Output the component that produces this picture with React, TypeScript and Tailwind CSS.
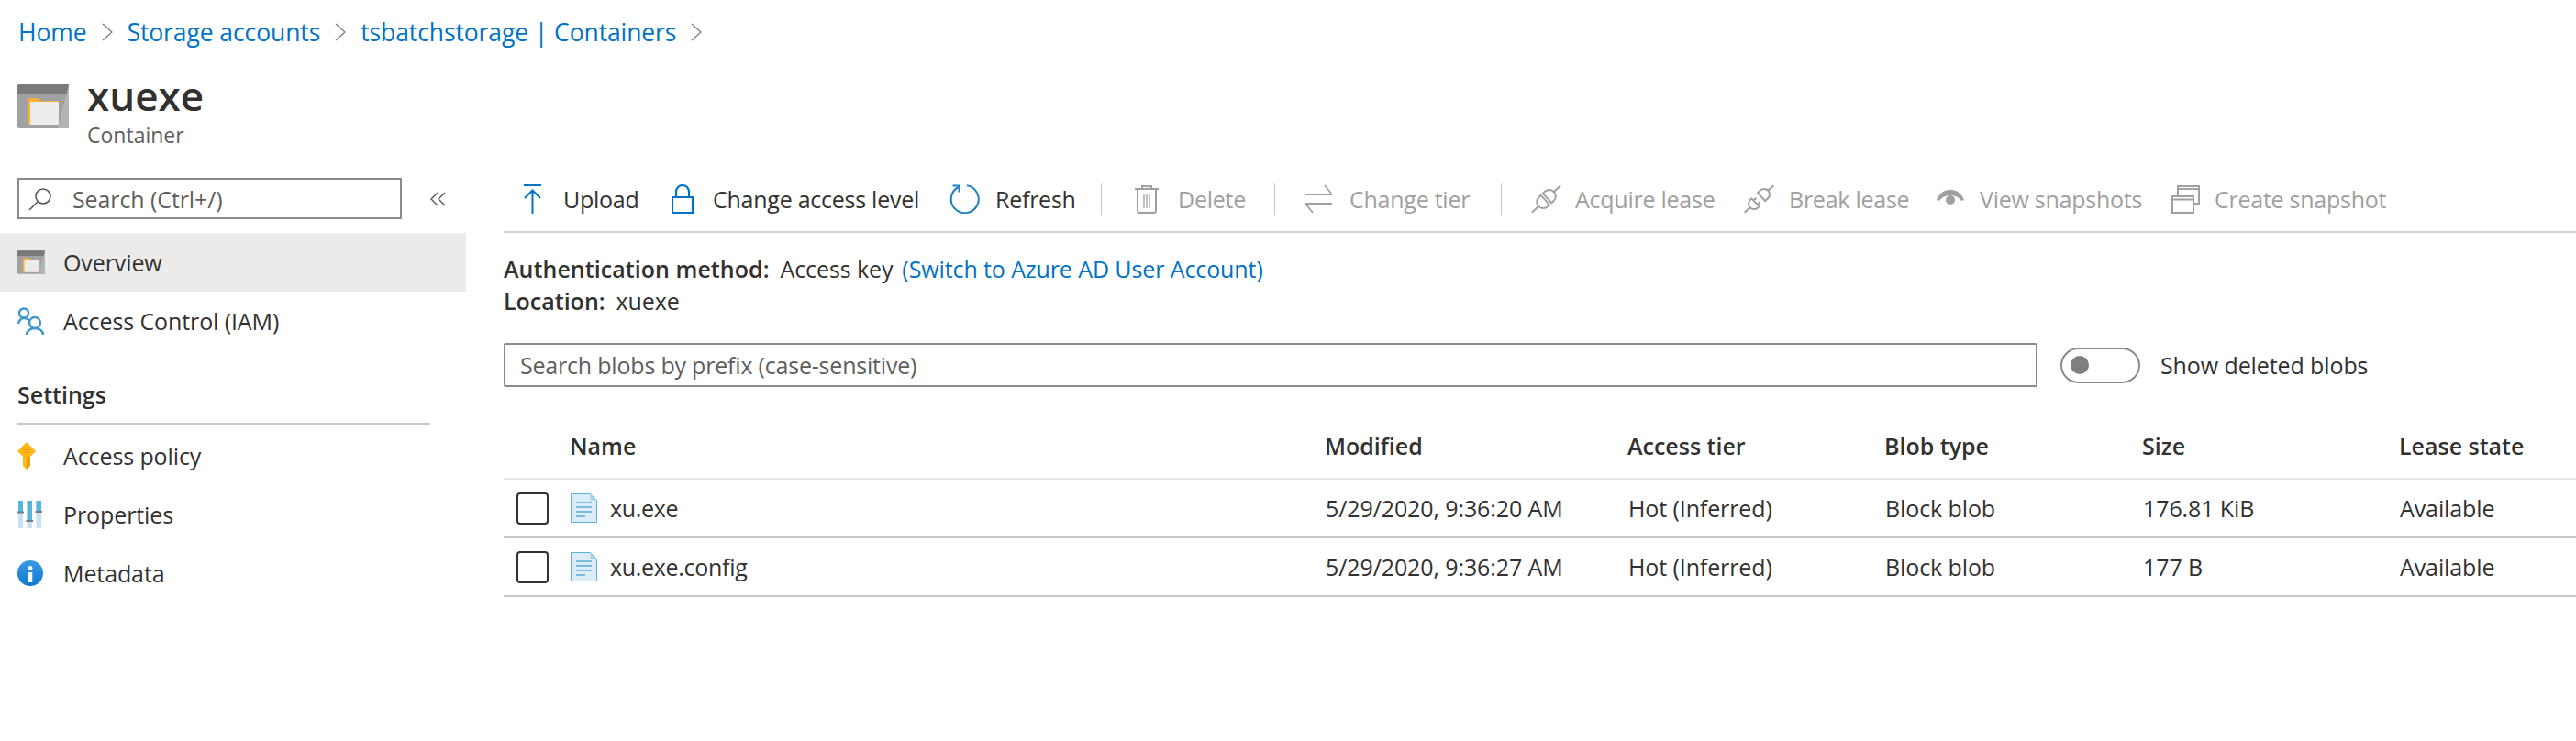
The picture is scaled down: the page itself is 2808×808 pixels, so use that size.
import type { ReactNode } from "react";

const columns = ["w-[823px]", "w-[330px]", "w-[280px]", "w-[281px]", "w-[280px]"];

const blobs = [
  { name: "xu.exe", modified: "5/29/2020, 9:36:20 AM", tier: "Hot (Inferred)", type: "Block blob", size: "176.81 KiB", lease: "Available" },
  { name: "xu.exe.config", modified: "5/29/2020, 9:36:27 AM", tier: "Hot (Inferred)", type: "Block blob", size: "177 B", lease: "Available" },
];

function ContainerIcon({ className }: { className: string }) {
  return (
    <svg viewBox="0 0 56 48" className={className}>
      <rect width="56" height="48" rx="2" fill="#a0a1a2" />
      <path d="M0 2a2 2 0 0 1 2-2h54v11H0z" fill="#7a7a7a" />
      <path d="M44 48 56 0v48z" fill="#b3b4b5" />
      <path d="M11 15h12l2 3h20v26H11z" fill="#fbb034" />
      <rect x="14" y="19" width="31" height="25" fill="#ececec" />
    </svg>
  );
}

function FileIcon() {
  return (
    <svg viewBox="0 0 29 32" className="h-[32px] w-[29px] shrink-0">
      <path d="M.5.5h21l7 7v24H.5z" fill="#dcedf7" stroke="#59b4d9" />
      <path d="M21.5.5v7h7z" fill="#9fd4ec" />
      <path d="M6 10h17M6 15h17M6 20h17M6 25h10" stroke="#59a9d4" strokeWidth="1.6" />
    </svg>
  );
}

function PlugIcon({ broken }: { broken?: boolean }) {
  return (
    <svg viewBox="0 0 33 32" fill="none" stroke="#a0a0a0" strokeWidth="2" className="h-[32px] w-[33px] shrink-0">
      <g transform="rotate(-43 16.5 16)">
        {broken ? (
          <>
            <path d="M-5 16H4M30 16H38" />
            <path d="M11 10H9a6 6 0 0 0 0 12h2zM11 13h4M11 19h4" />
            <path d="M20 10h4a6 6 0 0 1 0 12h-4z" />
          </>
        ) : (
          <>
            <path d="M-5 16H6M27 16H38" />
            <path d="M15 9h-3a7 7 0 0 0 0 14h3z" />
            <path d="M18 9h3a7 7 0 0 1 0 14h-3z" />
          </>
        )}
      </g>
    </svg>
  );
}

function Chevron() {
  return (
    <svg viewBox="0 0 12 20" fill="none" stroke="#777" strokeWidth="1.2" className="mx-[16px] h-[20px] w-[12px]">
      <path d="M1 1l10 9-10 9" />
    </svg>
  );
}

function ToolItem({ icon, label, disabled, gap, width }: { icon: ReactNode; label: string; disabled?: boolean; gap: string; width: string }) {
  return (
    <div className={`flex items-center ${gap} ${disabled ? "text-[#a0a0a0]" : "text-[#323130]"}`}>
      {icon}
      <span className={`${width} whitespace-nowrap tracking-[-0.25px]`}>{label}</span>
    </div>
  );
}

function NavItem({ icon, label, active }: { icon: ReactNode; label: string; active?: boolean }) {
  return (
    <div className={`flex h-[64px] items-center pl-[19px] ${active ? "bg-[#edebe9]" : ""}`}>
      <div className="flex w-[50px] shrink-0 items-center">{icon}</div>
      <span>{label}</span>
    </div>
  );
}

export default function App() {
  return (
    <div className="h-[808px] w-[2808px] overflow-hidden bg-white font-['Open_Sans','Noto_Sans',sans-serif] text-[25px] leading-[32px] tracking-[-0.1px] text-[#323130]">
      <nav className="flex h-[70px] items-center pl-[20px] text-[26.5px] text-[#0072c6]">
        <span>Home</span>
        <Chevron />
        <span>Storage accounts</span>
        <Chevron />
        <span>tsbatchstorage | Containers</span>
        <Chevron />
      </nav>

      <header className="flex h-[100px] pl-[19px]">
        <ContainerIcon className="mt-[22px] h-[48px] w-[56px]" />
        <div className="ml-[20px]">
          <h1 className="mt-[6px] text-[44px] leading-[56px] font-semibold tracking-normal text-[#323130]">xuexe</h1>
          <p className="text-[23px] leading-[30px] tracking-normal text-[#605e5c]">Container</p>
        </div>
      </header>

      <div className="flex pt-[24px]">
        <aside className="w-[508px] shrink-0">
          <div className="flex h-[45px] items-center">
            <div className="ml-[19px] flex h-[45px] w-[419px] items-center border-2 border-[#8a8a8a] pl-[10px] text-[#605e5c]">
              <svg viewBox="0 0 26 26" fill="none" stroke="#555" strokeWidth="1.6" className="h-[26px] w-[26px]"><circle cx="16" cy="10" r="8" /><path d="M10 16 1 25" /></svg>
              <span className="ml-[22px]">Search (Ctrl+/)</span>
            </div>
            <svg viewBox="0 0 18 16" fill="none" stroke="#555" strokeWidth="1.4" className="ml-[31px] h-[16px] w-[18px]"><path d="M8 1 1 8l7 7M16 1 9 8l7 7" /></svg>
          </div>
          <div className="mt-[15px]">
            <NavItem active label="Overview" icon={<ContainerIcon className="h-[26px] w-[30px]" />} />
            <NavItem
              label="Access Control (IAM)"
              icon={
                <svg viewBox="0 0 31 30" fill="none" stroke="#3f97c9" strokeWidth="2.4" className="h-[30px] w-[31px]">
                  <circle cx="7" cy="6.5" r="5" />
                  <circle cx="19" cy="17" r="6" />
                  <path d="M1 18c.5-3 3-6 6-6s5 1 6 3M10 30c0-4 4-7 9-7s9 3 9 7" />
                </svg>
              }
            />
            <h2 className="mt-[32px] flex h-[32px] items-center pl-[19px] font-semibold tracking-normal">Settings</h2>
            <div className="mt-[15px] ml-[19px] h-[2px] w-[450px] bg-[#c8c8c8]" />
            <div className="pt-[2px]">
              <NavItem
                label="Access policy"
                icon={
                  <svg viewBox="0 0 20 30" className="h-[30px] w-[20px]">
                    <path d="M10 .5 19.5 10 13.5 16V26L10 29.5 6.5 26V16L.5 10z" fill="#fcb714" stroke="#fcb714" strokeLinejoin="round" />
                    <path d="M13.5 16V26L10 29.5V16z" fill="#f09c0a" />
                    <path d="M6 8.5h8M6 11h8" stroke="#e8950c" />
                  </svg>
                }
              />
              <NavItem
                label="Properties"
                icon={
                  <svg viewBox="0 0 27 30" className="h-[30px] w-[27px]">
                    <path d="M1 0h5v30H1zM10.500 0h5.500v30h-5.500zM20.500 0h5.500v30h-5.500z" fill="#c5e3f2" />
                    <path d="M1 0h5v12H1zM10.500 0h5.500v21h-5.500zM20.500 0h5.500v11h-5.500z" fill="#59b4d9" />
                    <path d="M0 11.500h7v2H0zM9.500 21h7.500v2H9.500zM19.500 11h7.500v2h-7.500z" fill="#7a7a7a" />
                  </svg>
                }
              />
              <NavItem
                label="Metadata"
                icon={
                  <svg viewBox="0 0 28 28" className="h-[28px] w-[28px]">
                    <defs>
                      <linearGradient id="metaBlue" x1="0" y1="0" x2="0" y2="1">
                        <stop offset="0" stopColor="#3b9ae5" />
                        <stop offset="1" stopColor="#0f78cf" />
                      </linearGradient>
                    </defs>
                    <circle cx="14" cy="14" r="14" fill="url(#metaBlue)" />
                    <path d="M11.700 13h4.600v11h-4.600z" fill="#fff" />
                    <circle cx="14" cy="8.500" r="2.400" fill="#fff" />
                  </svg>
                }
              />
            </div>
          </div>
        </aside>

        <main className="ml-[41px] min-w-0 flex-1">
          <div className="flex h-[58px] items-start">
            <div className="flex h-[45px] items-center pl-[22px]">
              <ToolItem
                gap="gap-[24px]"
                width="w-[81px]"
                label="Upload"
                icon={
                  <svg viewBox="0 0 19 32" fill="none" stroke="#0072c6" strokeWidth="2" className="h-[32px] w-[19px]"><path d="M0 1h19M9.500 32V7M1 15l8.500-8.500 8.500 8.500" /></svg>
                }
              />
              <div className="ml-[37px]">
                <ToolItem
                  gap="gap-[21px]"
                  width="w-[226px]"
                  label="Change access level"
                  icon={
                    <svg viewBox="0 0 24 32" fill="none" stroke="#0072c6" strokeWidth="2.2" className="h-[32px] w-[24px]"><path d="M1 14h22v17H1zM5 14V8a7 7 0 0 1 14 0v6" /></svg>
                  }
                />
              </div>
              <div className="ml-[32px]">
                <ToolItem
                  gap="gap-[17px]"
                  width="w-[82px]"
                  label="Refresh"
                  icon={
                    <svg viewBox="0 0 33 32" fill="none" stroke="#1f7fc4" strokeWidth="2" className="h-[32px] w-[33px]"><path d="M19 1.300A15 15 0 1 1 9.500 3" /><path d="M3.500 1.500h7v7" /></svg>
                  }
                />
              </div>
              <div className="mr-[36px] ml-[33px] h-[34px] w-[1px] bg-[#c8c8c8]" />
              <ToolItem
                disabled
                gap="gap-[21px]"
                width="w-[71px]"
                label="Delete"
                icon={
                  <svg viewBox="0 0 26 32" fill="none" stroke="#a0a0a0" strokeWidth="2" className="h-[32px] w-[26px]"><path d="M0 5h26M8 5V2h10v3M3 5v24a2 2 0 0 0 2 2h16a2 2 0 0 0 2-2V5" /><path d="M10 11v15M13 11v15M16 11v15" strokeWidth="1.300" /></svg>
                }
              />
              <div className="mr-[32px] ml-[34px] h-[34px] w-[1px] bg-[#c8c8c8]" />
              <ToolItem
                disabled
                gap="gap-[18px]"
                width="w-[132px]"
                label="Change tier"
                icon={
                  <svg viewBox="0 0 31 32" fill="none" stroke="#a0a0a0" strokeWidth="1.8" className="h-[32px] w-[31px]"><path d="M1 11h29M22 1l8 10M30 21H1M9 31 1 21" /></svg>
                }
              />
              <div className="mr-[32px] ml-[33px] h-[34px] w-[1px] bg-[#c8c8c8]" />
              <ToolItem disabled gap="gap-[15px]" width="w-[151px]" label="Acquire lease" icon={<PlugIcon />} />
              <div className="ml-[33px]">
                <ToolItem disabled gap="gap-[16px]" width="w-[128px]" label="Break lease" icon={<PlugIcon broken />} />
              </div>
              <div className="ml-[33px]">
                <ToolItem
                  disabled
                  gap="gap-[17px]"
                  width="w-[176px]"
                  label="View snapshots"
                  icon={
                    <svg viewBox="0 0 30 22" className="h-[22px] w-[30px]">
                      <path d="M0 12C6-3 24-3 30 12L27 13C22 5 8 5 3 13z" fill="#a0a0a0" />
                      <circle cx="15" cy="12" r="5" fill="#a0a0a0" />
                    </svg>
                  }
                />
              </div>
              <div className="ml-[33px]">
                <ToolItem
                  disabled
                  gap="gap-[16px]"
                  width="w-[186px]"
                  label="Create snapshot"
                  icon={
                    <svg viewBox="0 0 31 32" fill="none" stroke="#a0a0a0" strokeWidth="2" className="h-[32px] w-[31px]"><path d="M7 12V2h23v19h-6M7 5h23" /><path d="M1 13h23v18H1zM1 16.500h23" /></svg>
                  }
                />
              </div>
            </div>
          </div>
          <div className="h-[2px] bg-[#d2d2d2]" />

          <div className="mt-[21px]">
            <div className="flex h-[36px] items-center">
              <b className="font-semibold tracking-[0.05px]">Authentication method:</b>
              <span className="ml-[12px]">Access key</span>
              <span className="ml-[10px] text-[#0072c6]">(Switch to Azure AD User Account)</span>
            </div>
            <div className="-mt-[1px] flex h-[36px] items-center">
              <b className="font-semibold tracking-normal">Location:</b>
              <span className="ml-[12px]">xuexe</span>
            </div>
          </div>

          <div className="mt-[28px] flex items-center">
            <div className="flex h-[48px] w-[1672px] items-center rounded-[2px] border-2 border-[#8a8a8a] pl-[16px] tracking-[-0.2px] text-[#605e5c]">Search blobs by prefix (case-sensitive)</div>
            <div className="ml-[25px] flex h-[39px] w-[87px] items-center rounded-full border-2 border-[#8a8a8a] pl-[9px]">
              <div className="h-[20px] w-[20px] rounded-full bg-[#7f7f7f]" />
            </div>
            <span className="ml-[22px]">Show deleted blobs</span>
          </div>

          <div className="mt-[48px]">
            <div className="flex h-[53px] items-start border-b-2 border-[#e8e8e8] pl-[72px] font-semibold tracking-normal">
              {["Name", "Modified", "Access tier", "Blob type", "Size"].map((h, i) => (
                <div key={h} className={`${columns[i]} shrink-0`}>{h}</div>
              ))}
              <div className="shrink-0">Lease state</div>
            </div>
            {blobs.map((blob) => (
              <div key={blob.name} className="flex h-[64px] items-center border-b-2 border-[#c8c8c8] pl-[14px]">
                <div className="h-[35px] w-[35px] shrink-0 rounded-[4px] border-2 border-[#323130]" />
                <div className={`ml-[24px] flex ${columns[0]} shrink-0 items-center gap-[14px]`}>
                  <FileIcon />
                  <span className="tracking-[-0.3px]">{blob.name}</span>
                </div>
                <div className={`${columns[1]} shrink-0`}>{blob.modified}</div>
                <div className={`${columns[2]} shrink-0`}>{blob.tier}</div>
                <div className={`${columns[3]} shrink-0`}>{blob.type}</div>
                <div className={`${columns[4]} shrink-0`}>{blob.size}</div>
                <div className="shrink-0">{blob.lease}</div>
              </div>
            ))}
          </div>
        </main>
      </div>
    </div>
  );
}
